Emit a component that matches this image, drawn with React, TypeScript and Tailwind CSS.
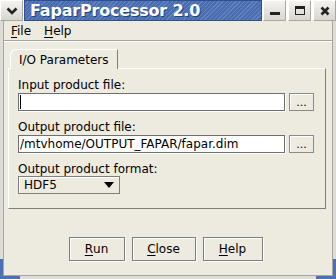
import React from 'react';

const ui = { fontFamily: '"DejaVu Sans", Verdana, sans-serif' };

function TitleButton({ children }: { children: React.ReactNode }) {
  return (
    <div className="w-[23px] h-[21px] flex items-center justify-center bg-gradient-to-b from-[#f4f3f0] to-[#d9d6cf] border border-[#a9a7a2] border-t-[#ffffff] border-l-[#ffffff]">
      {children}
    </div>
  );
}

function Field({ value, focused }: { value?: string; focused?: boolean }) {
  return (
    <div className="flex items-center gap-[4px]">
      <div className="w-[267px] h-[18px] bg-white border border-[#6f6f6f] shadow-[1px_1px_0_#ffffff] flex items-center px-[1px] text-[12px] text-black leading-none">
        {focused && <div className="w-[1px] h-[14px] bg-black" />}
        {value}
      </div>
      <button className="w-[25px] h-[18px] bg-[#edeae0] border border-[#8a8a8a] shadow-[inset_1px_1px_0_#ffffff] text-[11px] leading-none pb-[2px] text-black flex items-end justify-center">
        ...
      </button>
    </div>
  );
}

function Btn({ u, rest, w }: { u: string; rest: string; w: string }) {
  return (
    <button
      className={`${w} h-[24px] border border-[#7e7e7e] shadow-[inset_1px_1px_0_#ffffff,1px_1px_0_#ffffff] bg-[#edeae0] text-[12px] text-black flex items-center justify-center`}
    >
      <span className="underline underline-offset-2">{u}</span>
      {rest}
    </button>
  );
}

export default function App() {
  return (
    <div className="w-[336px] h-[279px] bg-[#dedcd7] relative overflow-hidden" style={ui}>
      <div className="flex h-[21px] bg-white">
        <TitleButton>
          <svg width="12" height="8" viewBox="0 0 12 8">
            <path d="M1.5 1.5 L6 6 L10.5 1.5" stroke="#222" strokeWidth="2.6" fill="none" />
          </svg>
        </TitleButton>
        <div className="flex-1 ml-[1px] mr-[1px] bg-[#4a6cb0] bg-[repeating-linear-gradient(135deg,#4a6cb0_0px,#4a6cb0_2px,#6282c0_2px,#6282c0_3px)] border border-[#2f4f8f] flex items-center pl-[5px]">
          <span className="text-white font-bold text-[16px] leading-none tracking-[-0.2px] [text-shadow:1px_1px_0_#23417e]">
            FaparProcessor 2.0
          </span>
        </div>
        <TitleButton>
          <div className="w-[10px] h-[3px] bg-[#222] mt-[5px]" />
        </TitleButton>
        <div className="w-[2px]" />
        <TitleButton>
          <div className="w-[10px] h-[9px] border border-[#222] border-t-[3px]" />
        </TitleButton>
        <div className="w-[2px]" />
        <TitleButton>
          <svg width="10" height="10" viewBox="0 0 10 10">
            <path d="M1.5 1.5 L8.5 8.5 M8.5 1.5 L1.5 8.5" stroke="#222" strokeWidth="2.6" />
          </svg>
        </TitleButton>
      </div>

      <div className="h-[254px] mx-[3px] bg-[#edeae0] border-l border-r border-[#a8a6a0] flex flex-col text-black">
        <div className="h-[19px] flex items-center gap-[13px] pl-[7px] text-[12px]">
          <span>
            <span className="underline underline-offset-2">F</span>ile
          </span>
          <span>
            <span className="underline underline-offset-2">H</span>elp
          </span>
        </div>
        <div className="h-[1px] bg-[#a5a39d]" />
        <div className="h-[1px] bg-[#ffffff]" />

        <div className="pl-[4px] pr-[6px] pt-[7px]">
          <div className="flex">
            <div className="ml-[2px] h-[20px] px-[8px] flex items-center text-[12px] border-l border-t border-white border-r border-r-[#7e7e7e] rounded-tl-[6px] bg-[#edeae0] relative z-10 -mb-[1px]">
              I/O Parameters
            </div>
          </div>
          <div className="border border-t-white border-l-white border-r-[#7e7e7e] border-b-[#7e7e7e] pt-[9px] pl-[9px] pb-[14px] text-[12px]">
            <div className="leading-[14px] mb-[1px]">Input product file:</div>
            <Field focused />
            <div className="leading-[14px] mt-[9px] mb-[1px]">Output product file:</div>
            <Field value="/mtvhome/OUTPUT_FAPAR/fapar.dim" />
            <div className="leading-[14px] mt-[9px]">Output product format:</div>
            <div className="w-[102px] h-[18px] border border-[#7e7e7e] shadow-[inset_1px_1px_0_#ffffff] flex items-center justify-between pl-[5px] pr-[5px]">
              <span>HDF5</span>
              <svg width="10" height="6" viewBox="0 0 10 6">
                <path d="M0 0 L10 0 L5 6 Z" fill="#000" />
              </svg>
            </div>
          </div>
        </div>

        <div className="flex justify-center gap-[7px] mt-[28px] pr-[5px]">
          <Btn u="R" rest="un" w="w-[56px]" />
          <Btn u="C" rest="lose" w="w-[64px]" />
          <Btn u="H" rest="elp" w="w-[60px]" />
        </div>
      </div>
      <div className="h-[1px] mx-[3px] bg-[#a8a6a0]" />

      <div className="absolute left-0 bottom-0 w-[3px] h-[20px] bg-[#4d6fb3]" />
      <div className="absolute left-0 bottom-0 w-[20px] h-[3px] bg-[#4d6fb3]" />
      <div className="absolute right-0 bottom-0 w-[3px] h-[20px] bg-[#4d6fb3]" />
      <div className="absolute right-0 bottom-0 w-[20px] h-[3px] bg-[#4d6fb3]" />
    </div>
  );
}
